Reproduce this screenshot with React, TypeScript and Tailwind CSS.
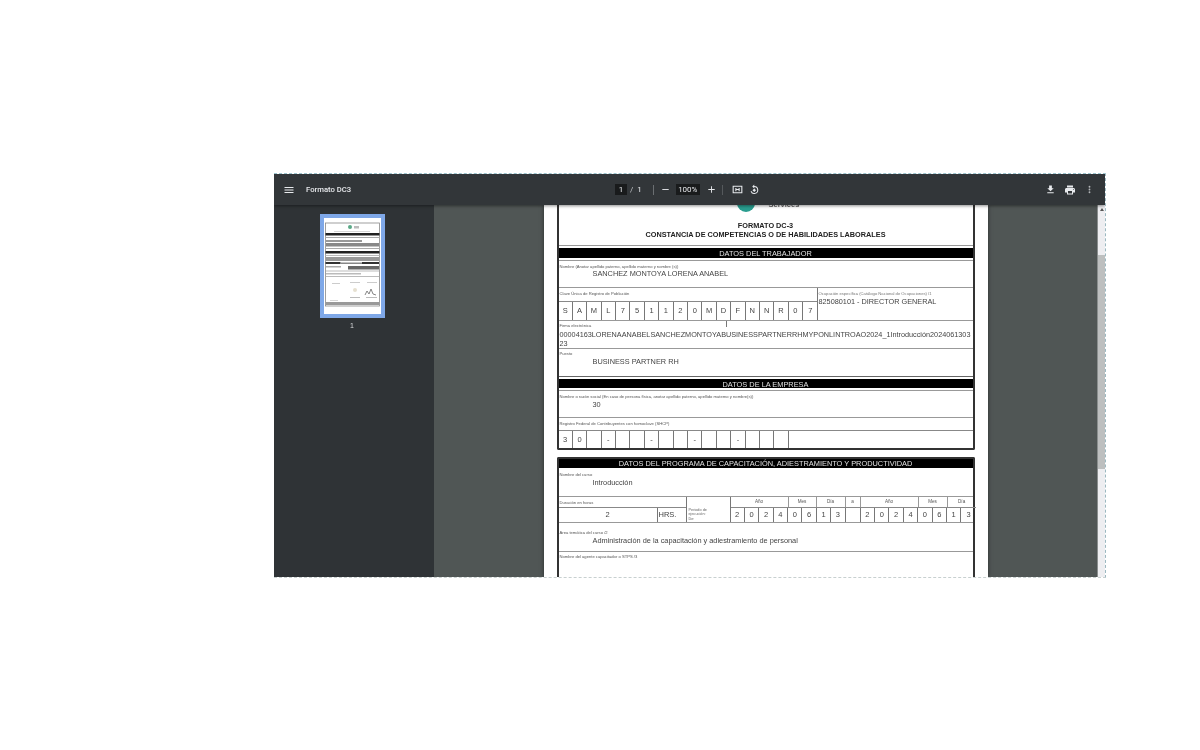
import React from "react";

const Icon = ({ d, size = 12, className = "" }: { d: string; size?: number; className?: string }) => (
  <svg viewBox="0 0 24 24" width={size} height={size} fill="currentColor" className={className}>
    <path d={d} fillRule="evenodd" />
  </svg>
);

const Label = ({ children, className = "" }: { children: React.ReactNode; className?: string }) => (
  <div className={`text-[4.15px] leading-[6px] whitespace-nowrap text-[#555] ${className}`}>{children}</div>
);

const Band = ({ children, className = "h-[9px] leading-[11px]" }: { children: React.ReactNode; className?: string }) => (
  <div className={`bg-black text-[#e0e0e0] text-[7.4px] text-center whitespace-nowrap ${className}`}>{children}</div>
);

const Value = ({ children, className = "" }: { children: React.ReactNode; className?: string }) => (
  <div className={`pl-[33px] text-[7.35px] leading-[10px] text-[#444] ${className}`}>{children}</div>
);

const Cells = ({ items, className = "" }: { items: string[]; className?: string }) => (
  <div className={`flex h-full ${className}`}>
    {items.map((c, i) => (
      <div key={i} className="w-[14.4px] shrink-0 h-full border-r border-[#777] flex items-center justify-center text-[7.5px] text-[#444]">
        {c}
      </div>
    ))}
  </div>
);

const Head = ({ w, t }: { w: string; t: string }) => (
  <div className={`${w} h-full border-r border-[#999] text-center text-[4.6px] leading-[10px] text-[#555]`}>{t}</div>
);

const Thumbnail = () => (
  <svg viewBox="0 0 57 96" width="57" height="96" className="block blur-[0.7px]">
    <rect width="57" height="96" fill="#fff" />
    <rect x="1.5" y="5" width="54" height="83" fill="none" stroke="#888" strokeWidth="0.8" />
    <circle cx="26" cy="9" r="2" fill="#5aa987" />
    <rect x="30" y="8" width="5" height="2.5" fill="#bbb" />
    <rect x="10" y="13" width="36" height="0.8" fill="#ccc" />
    <rect x="1.5" y="15" width="54" height="2.5" fill="#222" />
    <rect x="1.5" y="19" width="54" height="1" fill="#aaa" />
    <rect x="2" y="22" width="36" height="2" fill="#999" />
    <rect x="2" y="25" width="53" height="3.5" fill="#888" />
    <rect x="1.5" y="30" width="54" height="1" fill="#aaa" />
    <rect x="1.5" y="33" width="54" height="2.5" fill="#222" />
    <rect x="1.5" y="37" width="54" height="1" fill="#bbb" />
    <rect x="2" y="39" width="53" height="4" fill="#999" />
    <rect x="1.5" y="44" width="15" height="2" fill="#333" />
    <rect x="38" y="44" width="17" height="2" fill="#333" />
    <rect x="16" y="44.500" width="22" height="1.5" fill="#888" />
    <rect x="2" y="48" width="15" height="1.5" fill="#aaa" />
    <rect x="24" y="48" width="31" height="3.500" fill="#666" />
    <rect x="2" y="52.500" width="53" height="1" fill="#bbb" />
    <rect x="2" y="55" width="35" height="1.500" fill="#bbb" />
    <rect x="1.5" y="58" width="54" height="0.8" fill="#aaa" />
    <rect x="8" y="65" width="8" height="1" fill="#ccc" />
    <rect x="26" y="64" width="10" height="1" fill="#ccc" />
    <rect x="43" y="64" width="10" height="1" fill="#ccc" />
    <circle cx="31" cy="72" r="2" fill="#e6e0d0" />
    <path d="M41 77l2-4 2 3 2-5 2 5 3 1" fill="none" stroke="#777" strokeWidth="0.9" />
    <rect x="26" y="79" width="10" height="1" fill="#bbb" />
    <rect x="42" y="79" width="11" height="1" fill="#bbb" />
    <rect x="6" y="82" width="8" height="0.8" fill="#ccc" />
    <rect x="1.5" y="84" width="54" height="3" fill="#999" />
  </svg>
);

const curp = "S A M L 7 5 1 1 2 0 M D F N N R 0 7".split(" ");
const rfc = ["3", "0", "", "-", "", "", "-", "", "", "-", "", "", "-", "", "", ""];
const date = "2 0 2 4 0 6 1 3".split(" ");

export default function App() {
  return (
    <div className="w-[1200px] h-[750px] bg-white pt-[173px] pl-[274px] overflow-hidden blur-[0.7px] [font-family:'Liberation_Sans',Arial,sans-serif]">
      <div className="w-[832px] h-[405px] flex flex-col border-y border-r border-dashed border-t-[#9cc4cf] border-r-[#9cb8c0] border-b-[#c8d0d0] overflow-hidden">
        {/* toolbar */}
        <div className="h-[31px] shrink-0 bg-[#323639] text-[#e8eaed] flex items-center relative z-10 shadow-[0_1px_3px_rgba(0,0,0,0.45)]">
          <div className="w-[160px] flex items-center pl-[9px]">
            <Icon size={12} d="M3 18h18v-2H3v2zm0-5h18v-2H3v2zm0-7v2h18V6H3z" />
            <span className="ml-[11px] text-[7.7px] [font-family:Roboto,sans-serif] font-medium">Formato DC3</span>
          </div>
          <div className="flex items-center ml-[181px] text-[8px] [font-family:Roboto,sans-serif]">
            <div className="w-[12px] h-[11px] bg-[#191b1c] text-center leading-[11px]">1</div>
            <span className="ml-[3px] text-[#c4c7c9]">/</span>
            <span className="ml-[4px]">1</span>
            <div className="ml-[11px] w-px h-[10px] bg-[#6b6f72]" />
            <Icon size={11} className="ml-[6px]" d="M5 11h14v2H5z" />
            <div className="ml-[5px] w-[24px] h-[11px] bg-[#191b1c] text-center leading-[11px]">100%</div>
            <Icon size={11} className="ml-[6px]" d="M19 13h-6v6h-2v-6H5v-2h6V5h2v6h6z" />
            <div className="ml-[5px] w-px h-[10px] bg-[#55595c]" />
            <Icon size={13} className="ml-[8px]" d="M3 5h18v14H3V5zm2 2v10h14V7H5zm3 2h2v2h4V9h2v6h-2v-2h-4v2H8V9z" />
            <Icon size={12} className="ml-[4px]" d="M12.5 4a8 8 0 1 1-7.4 11l1.8-.8A6 6 0 1 0 12.5 6v3l-4-4 4-4v3zM12.500 9l3.500 3.500-3.500 3.500L9 12.500 12.500 9z" />
          </div>
          <div className="ml-auto flex items-center pr-[10px] gap-[8px]">
            <Icon size={11} d="M19 9h-4V3H9v6H5l7 7 7-7zM5 18v2h14v-2H5z" />
            <Icon size={12} d="M19 8H5c-1.660 0-3 1.340-3 3v6h4v4h12v-4h4v-6c0-1.660-1.340-3-3-3zm-3 11H8v-5h8v5zm3-7c-.55 0-1-.45-1-1s.45-1 1-1 1 .45 1 1-.45 1-1 1zm-1-9H6v4h12V3z" />
            <Icon size={11} className="opacity-70" d="M12 8a2 2 0 1 0 0-4 2 2 0 0 0 0 4zm0 2a2 2 0 1 0 0 4 2 2 0 0 0 0-4zm0 6a2 2 0 1 0 0 4 2 2 0 0 0 0-4z" />
          </div>
        </div>

        <div className="flex-1 min-h-0 flex">
          {/* sidebar */}
          <div className="w-[160px] shrink-0 bg-[#2f3336] flex flex-col items-center pt-[9px] pr-[4px]">
            <div className="border-[4px] border-[#7fa8e8] leading-none">
              <Thumbnail />
            </div>
            <div className="mt-[3px] text-[7px] leading-[9px] text-[#d8dadc]">1</div>
          </div>

          {/* main */}
          <div className="flex-1 min-w-0 bg-[#505655] flex justify-center overflow-hidden">
            <div className="w-[444px] shrink-0 bg-white px-[13px] shadow-[0_0_4px_rgba(0,0,0,0.5)]">
              {/* first form */}
              <div className="border-x-2 border-b-2 border-[#333] rounded-b-[2px]">
                <div className="h-[41px] border-b border-[#999] flex flex-col">
                  <div className="flex h-[7px] pl-[178px]">
                    <div className="w-[18px] h-[18px] -mt-[11px] shrink-0 rounded-full bg-[#2a9d8f]" />
                    <div className="ml-[14px] -mt-[5px] text-[7.5px] leading-[9px] text-[#666] font-bold">Services</div>
                  </div>
                  <div className="mt-[10px] text-center font-bold text-[#222] text-[7.3px] leading-[8px]">FORMATO DC-3</div>
                  <div className="text-center font-bold text-[#222] text-[7.3px] leading-[9px] whitespace-nowrap">CONSTANCIA DE COMPETENCIAS O DE HABILIDADES LABORALES</div>
                </div>
                <div className="h-[15px] pt-[2px] border-b border-[#999]"><Band className="h-[10px] leading-[11px]">DATOS DEL TRABAJADOR</Band></div>
                <div className="h-[27px] border-b border-[#999] pt-[3px] pl-[1px]">
                  <Label>Nombre (Anotar apellido paterno, apellido materno y nombre (s))</Label>
                  <Value className="-mt-[1px]">SANCHEZ MONTOYA LORENA ANABEL</Value>
                </div>
                <div className="h-[33px] border-b border-[#999] flex">
                  <div className="w-[259px] shrink-0 flex flex-col border-r border-[#777]">
                    <div className="h-[14px] border-b border-[#888] pt-[3px] pl-[1px]"><Label>Clave Única de Registro de Población</Label></div>
                    <div className="flex-1 min-h-0"><Cells items={curp} className="[&>*:last-child]:border-r-0" /></div>
                  </div>
                  <div className="flex-1 pt-[3px] pl-[1px]">
                    <Label className="text-[#777]">Ocupación específica (Catálogo Nacional de Ocupaciones) /1</Label>
                    <div className="text-[7.3px] leading-[9px] text-[#444]">825080101 - DIRECTOR GENERAL</div>
                  </div>
                </div>
                <div className="h-[28px] border-b border-[#999] pt-[2px] pl-[1px] relative">
                  <Label>Firma electrónica</Label>
                  <div className="mt-[1px] text-[7.28px] leading-[9px] text-[#444] whitespace-nowrap">
                    00004163LORENAANABELSANCHEZMONTOYABUSINESSPARTNERRHMYPONLINTROAO2024_1Introducción2024061303
                    <br />
                    23
                  </div>
                  <div className="absolute left-[167px] top-0 w-px h-[6px] bg-[#777]" />
                </div>
                <div className="h-[28px] border-b border-[#666] pt-[2px] pl-[1px]">
                  <Label>Puesto</Label>
                  <Value>BUSINESS PARTNER RH</Value>
                </div>
                <div className="h-[14px] pt-[2px] border-b border-[#999]"><Band>DATOS DE LA EMPRESA</Band></div>
                <div className="h-[27px] border-b border-[#999] pt-[3px] pl-[1px]">
                  <Label>Nombre o razón social (En caso de persona física, anotar apellido paterno, apellido materno y nombre(s))</Label>
                  <Value>30</Value>
                </div>
                <div className="h-[13px] border-b border-[#888] pt-[3px] pl-[1px]"><Label>Registro Federal de Contribuyentes con homoclave (SHCP)</Label></div>
                <div className="h-[17px]"><Cells items={rfc} /></div>
              </div>

              {/* second form */}
              <div className="mt-[7px] h-[200px] border-x-2 border-t-2 border-[#333] rounded-t-[2px]">
                <Band className="h-[9px] leading-[10px]">DATOS DEL PROGRAMA DE CAPACITACIÓN, ADIESTRAMIENTO Y PRODUCTIVIDAD</Band>
                <div className="h-[29px] border-b border-[#999] pt-[4px] pl-[1px]">
                  <Label>Nombre del curso</Label>
                  <Value>Introducción</Value>
                </div>
                <div className="h-[26px] border-b border-[#999] flex">
                  <div className="w-[128px] shrink-0 flex flex-col border-r border-[#777]">
                    <div className="h-[11px] border-b border-[#888] pt-[3px] pl-[1px]"><Label>Duración en horas</Label></div>
                    <div className="flex-1 flex text-[7.5px] text-[#444]">
                      <div className="w-[99px] border-r border-[#777] flex items-center justify-center">2</div>
                      <div className="flex-1 flex items-center pl-[1px]">HRS.</div>
                    </div>
                  </div>
                  <div className="w-[43px] shrink-0 flex flex-col justify-end pb-[1px] pl-[2px] text-[3.8px] leading-[4.400px] text-[#666]">
                    <div>Periodo de</div>
                    <div>ejecución:</div>
                    <div>De:</div>
                  </div>
                  <div className="flex-1 flex flex-col border-l border-[#777]">
                    <div className="h-[11px] border-b border-[#888] flex">
                      <Head w="w-[58px]" t="Año" />
                      <Head w="w-[28px]" t="Mes" />
                      <Head w="w-[29px]" t="Día" />
                      <Head w="w-[15px]" t="a" />
                      <Head w="w-[58px]" t="Año" />
                      <Head w="w-[29px]" t="Mes" />
                      <div className="flex-1 text-center text-[4.6px] leading-[10px] text-[#555]">Día</div>
                    </div>
                    <div className="flex-1 min-h-0 flex">
                      <Cells items={date} />
                      <div className="w-[15px] shrink-0 border-r border-[#777]" />
                      <Cells items={date} className="[&>*:last-child]:border-r-0" />
                    </div>
                  </div>
                </div>
                <div className="h-[29px] border-b border-[#999] pt-[7px] pl-[1px]">
                  <Label>Área temática del curso /2</Label>
                  <Value>Administración de la capacitación y adiestramiento de personal</Value>
                </div>
                <div className="pt-[2px] pl-[1px]"><Label>Nombre del agente capacitador o STPS /3</Label></div>
              </div>
            </div>
          </div>

          {/* scrollbar */}
          <div className="w-[8px] shrink-0 bg-[#eeeef1] flex flex-col border-l border-[#8a8e8e]">
            <div className="h-[50px] flex justify-center pt-[3px]">
              <div className="w-0 h-0 border-x-[2px] border-x-transparent border-b-[3px] border-b-[#555]" />
            </div>
            <div className="h-[214px] bg-[#bdbfbf]" />
          </div>
        </div>
      </div>
    </div>
  );
}
